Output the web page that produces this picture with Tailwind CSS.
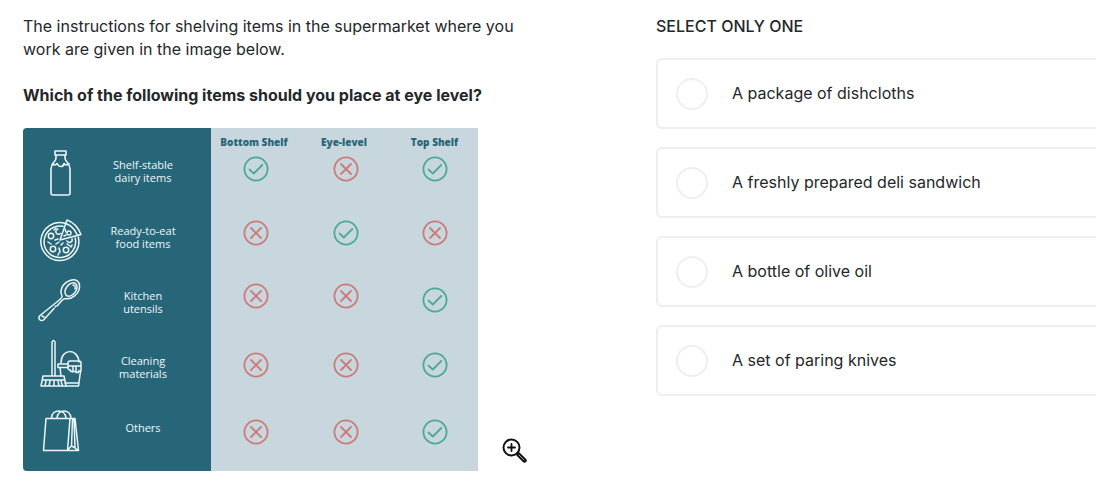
<!DOCTYPE html>
<html lang="en">
<head>
    <meta charset="UTF-8">
    <meta name="viewport" content="width=device-width, initial-scale=1.0">
    <title>Assessment Question</title>
    <script src="https://cdn.jsdelivr.net/npm/@tailwindcss/browser@4"></script>
</head>
<body class="bg-white font-[Inter,sans-serif] text-base leading-[23px] text-[#24272a]">
    <!-- shared status marks -->
    <svg class="hidden" aria-hidden="true">
        <symbol id="yes" viewBox="0 0 26 26" fill="none" stroke="#4caa94" stroke-width="1.8" stroke-linecap="round" stroke-linejoin="round">
            <circle cx="13" cy="13" r="11.6"/>
            <path d="M6.5 13.5l4.3 4L19.3 9"/>
        </symbol>
        <symbol id="no" viewBox="0 0 26 26" fill="none" stroke="#cc7b78" stroke-width="1.8" stroke-linecap="round">
            <circle cx="13" cy="13" r="11.6"/>
            <path d="M8 8l10 10M18 8L8 18"/>
        </symbol>
    </svg>
    <main class="grid grid-cols-[656fr_440fr]">
        <section class="pl-[23px] pt-[15px] pb-3">
            <p class="max-w-[510px]">The instructions for shelving items in the supermarket where you work are given in the image below.</p>
            <p class="mt-[23px] font-bold">Which of the following items should you place at eye level?</p>
            <div class="mt-[21px] flex items-end gap-6">
                <div class="w-full max-w-[455px] overflow-hidden rounded-l bg-[#c8d6dd]">
                    <table class="w-full table-fixed text-center font-['Open_Sans',sans-serif] text-[11px] leading-[13px]">
                        <colgroup>
                            <col class="w-[76px]">
                            <col class="w-[112px]">
                            <col class="w-[90px]">
                            <col class="w-[90px]">
                            <col>
                        </colgroup>
                        <thead>
                            <tr class="h-[22px] text-[10px] text-[#276678]">
                                <td class="bg-[#276678]" colspan="2"></td>
                                <th scope="col" class="pt-1.5 pr-1 font-extrabold whitespace-nowrap">Bottom Shelf</th>
                                <th scope="col" class="pt-1.5 pr-1 font-extrabold whitespace-nowrap">Eye-level</th>
                                <th scope="col" class="pt-1.5 font-extrabold whitespace-nowrap">Top Shelf</th>
                            </tr>
                        </thead>
                        <tbody>
                            <tr class="h-[54px]">
                                <td class="bg-[#276678] pb-2">
                                    <svg class="mx-auto h-[46px] w-[46px]" viewBox="0 0 46 46" fill="none" stroke="#eef6f8" stroke-width="1.6" stroke-linejoin="round" stroke-linecap="round">
                                        <path d="M17 1h11v4H17zM18 5v3c0 4-5 5-5 11v24q0 2 2 2h15q2 0 2-2V19c0-6-5-7-5-11V5"/>
                                        <path d="M14.500 13.500q2 3 4.500 0q1.500 3 4 3t3-3q2 3 5 0"/>
                                    </svg>
                                </td>
                                <th scope="row" class="bg-[#276678] pr-6 pb-3 font-normal text-[#eef6f8]">Shelf-stable<br>dairy items</th>
                                <td class="pb-4"><svg class="mx-auto size-[26px]" role="img" aria-label="Yes"><use href="#yes"/></svg></td>
                                <td class="pb-4"><svg class="mx-auto size-[26px]" role="img" aria-label="No"><use href="#no"/></svg></td>
                                <td class="pb-4"><svg class="mx-auto size-[26px]" role="img" aria-label="Yes"><use href="#yes"/></svg></td>
                            </tr>
                            <tr class="h-[66px]">
                                <td class="bg-[#276678] pt-2">
                                    <svg class="mx-auto size-[44px]" viewBox="0 0 44 44" fill="none" stroke="#eef6f8" stroke-width="1.500" stroke-linecap="round" stroke-linejoin="round">
                                        <path d="M26 4.200A19 19 0 1 0 39.300 18"/>
                                        <path d="M24 7.300A15.800 15.800 0 1 0 36.200 19"/>
                                        <path d="M28 1L21 21l21-5.500C39 8 34 3 28 1zM27 4.500c5 2 9 6 11 11"/>
                                        <circle cx="12" cy="17" r="2.700"/><circle cx="14" cy="30" r="2.700"/><circle cx="27" cy="31" r="2.700"/><circle cx="30" cy="14" r="2"/>
                                        <path d="M19 10a2.700 2.700 0 1 0 2.500 4.500M28 22a2.700 2.700 0 0 0 5-2M16 21l3-1M9 23l3 2M17 25l3-2M20 29l1 4M24 24l-2 2M28 25l3 2M19 36l1-2M17 9l-2 2M33 26l-1 2M26 10l1 3M25 17l2-1"/>
                                    </svg>
                                </td>
                                <th scope="row" class="bg-[#276678] pr-6 font-normal text-[#eef6f8]">Ready-to-eat<br>food items</th>
                                <td class="pb-2"><svg class="mx-auto size-[26px]" role="img" aria-label="No"><use href="#no"/></svg></td>
                                <td class="pb-2"><svg class="mx-auto size-[26px]" role="img" aria-label="Yes"><use href="#yes"/></svg></td>
                                <td class="pb-2"><svg class="mx-auto size-[26px]" role="img" aria-label="No"><use href="#no"/></svg></td>
                            </tr>
                            <tr class="h-[64px]">
                                <td class="bg-[#276678] pb-1">
                                    <svg class="mx-auto size-[46px]" viewBox="0 0 46 46" fill="none" stroke="#eef6f8" stroke-width="1.500" stroke-linecap="round" stroke-linejoin="round">
                                        <path d="M24 19c-3-6 1-13 8-15.500 6-2 10 1 9.500 6.500-.5 7-8 13-14 11.500q-2 0-4 2.500l-4.500 5M24 19q0 2-2 3.500L2 38.500c-3 3 1 7 4 4L16 31.500"/>
                                        <ellipse cx="33" cy="12.500" rx="5" ry="7.500" transform="rotate(38 33 12.500)"/>
                                        <path d="M18 29l-1 1M4 39l2 1M35 8q3 0 2 4"/>
                                    </svg>
                                </td>
                                <th scope="row" class="bg-[#276678] pr-6 font-normal text-[#eef6f8]">Kitchen<br>utensils</th>
                                <td class="pb-3"><svg class="mx-auto size-[26px]" role="img" aria-label="No"><use href="#no"/></svg></td>
                                <td class="pb-3"><svg class="mx-auto size-[26px]" role="img" aria-label="No"><use href="#no"/></svg></td>
                                <td class="pb-1"><svg class="mx-auto size-[26px]" role="img" aria-label="Yes"><use href="#yes"/></svg></td>
                            </tr>
                            <tr class="h-[66px]">
                                <td class="bg-[#276678] pb-2">
                                    <svg class="mx-auto h-[48px] w-[42px]" viewBox="0 0 42 48" fill="none" stroke="#eef6f8" stroke-width="1.500" stroke-linecap="round" stroke-linejoin="round">
                                        <path d="M12 37V3q1.500-3 3 0v34M3 37h21l2 10H1zM2.500 41h22M6 42l-1 5M10 42l-1 5M14 42v5M18 42l1 5M21 42l1.500 5"/>
                                        <path d="M28 25H18v3.500h10M20 28.500l1 8.500M25 44h13M26 47h12.500l2-14.500"/>
                                        <path d="M21 24c0-15 17-15 18-1"/>
                                        <path d="M28 24q0-2 2-2h9q2 0 2 2v8h-2.500v1.500h-2.500V31v1.500h-3V31v1.500h-2.500V31q-2.500 0-2.500-2zM33 28v5M36 28v5M28 27h13"/>
                                    </svg>
                                </td>
                                <th scope="row" class="bg-[#276678] pr-6 font-normal text-[#eef6f8]">Cleaning<br>materials</th>
                                <td class="pb-1"><svg class="mx-auto size-[26px]" role="img" aria-label="No"><use href="#no"/></svg></td>
                                <td class="pb-1"><svg class="mx-auto size-[26px]" role="img" aria-label="No"><use href="#no"/></svg></td>
                                <td class="pb-1"><svg class="mx-auto size-[26px]" role="img" aria-label="Yes"><use href="#yes"/></svg></td>
                            </tr>
                            <tr class="h-[71px]">
                                <td class="bg-[#276678] pb-3">
                                    <svg class="mx-auto h-[44px] w-[38px]" viewBox="0 0 38 44" fill="none" stroke="#eef6f8" stroke-width="1.500" stroke-linecap="round" stroke-linejoin="round">
                                        <path d="M4 10.500h29l3.500 32H1.500zM28 10.500l-2.500 32M32 11l1 29M30.500 11l-1 27-4 4M29.500 38l3 1.500 3.500 3"/>
                                        <path d="M9.500 10C10 .500 23 .500 24 10M15 10C16 .500 28 .500 29 10"/>
                                    </svg>
                                </td>
                                <th scope="row" class="bg-[#276678] pr-6 pb-4 font-normal text-[#eef6f8]">Others</th>
                                <td class="pb-2"><svg class="mx-auto size-[26px]" role="img" aria-label="No"><use href="#no"/></svg></td>
                                <td class="pb-2"><svg class="mx-auto size-[26px]" role="img" aria-label="No"><use href="#no"/></svg></td>
                                <td class="pb-2"><svg class="mx-auto size-[26px]" role="img" aria-label="Yes"><use href="#yes"/></svg></td>
                            </tr>
                        </tbody>
                    </table>
                </div>
                <button type="button" aria-label="Zoom in" class="mb-2 shrink-0 cursor-pointer">
                    <svg class="size-[25px]" viewBox="0 0 25 25" fill="none" stroke="#111" stroke-linecap="round">
                        <circle cx="9.500" cy="9.500" r="8" stroke-width="2"/>
                        <path d="M9.500 6v7M6 9.500h7" stroke-width="1.800"/>
                        <path d="M16.500 16.500l6 6" stroke-width="4.500"/>
                        <path d="M17 17l5 5" stroke="#aaa" stroke-width="1"/>
                    </svg>
                </button>
            </div>
        </section>

        <fieldset class="min-w-0 pt-[15px]">
            <legend class="float-left font-medium">SELECT ONLY ONE</legend>
            <div class="clear-both flex flex-col gap-[18px] pt-5">
                <label class="flex h-[71px] items-center gap-6 rounded-l-md border-2 border-r-0 border-[#eeeeee] pl-[18px] cursor-pointer">
                    <input type="radio" name="answer" value="dishcloths" class="size-8 shrink-0 appearance-none rounded-full border-2 border-[#eeeeee] checked:border-8 checked:border-teal-600">
                    <span>A package of dishcloths</span>
                </label>
                <label class="flex h-[71px] items-center gap-6 rounded-l-md border-2 border-r-0 border-[#eeeeee] pl-[18px] cursor-pointer">
                    <input type="radio" name="answer" value="sandwich" class="size-8 shrink-0 appearance-none rounded-full border-2 border-[#eeeeee] checked:border-8 checked:border-teal-600">
                    <span>A freshly prepared deli sandwich</span>
                </label>
                <label class="flex h-[71px] items-center gap-6 rounded-l-md border-2 border-r-0 border-[#eeeeee] pl-[18px] cursor-pointer">
                    <input type="radio" name="answer" value="oil" class="size-8 shrink-0 appearance-none rounded-full border-2 border-[#eeeeee] checked:border-8 checked:border-teal-600">
                    <span>A bottle of olive oil</span>
                </label>
                <label class="flex h-[71px] items-center gap-6 rounded-l-md border-2 border-r-0 border-[#eeeeee] pl-[18px] cursor-pointer">
                    <input type="radio" name="answer" value="knives" class="size-8 shrink-0 appearance-none rounded-full border-2 border-[#eeeeee] checked:border-8 checked:border-teal-600">
                    <span>A set of paring knives</span>
                </label>
            </div>
        </fieldset>
    </main>
</body>
</html>
